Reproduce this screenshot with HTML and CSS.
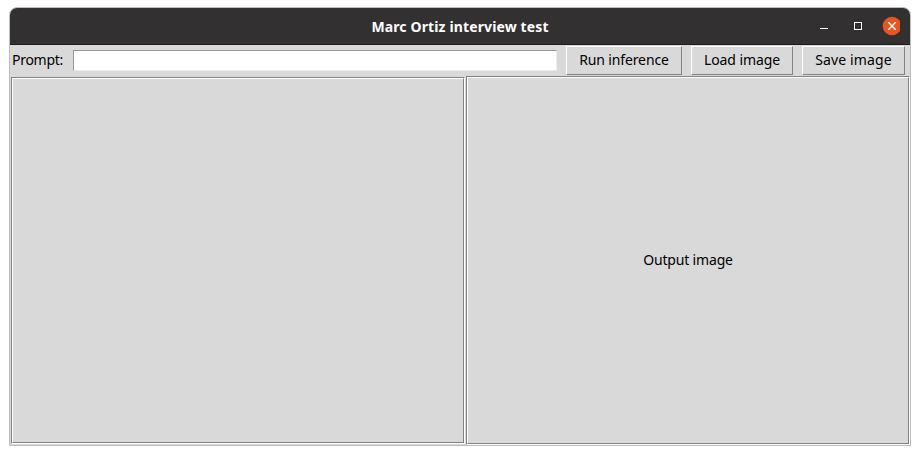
FILE: index.html
```
<!DOCTYPE html>
<html lang="en">
<head>
<meta charset="utf-8">
<title>Marc Ortiz interview test</title>
<link rel="stylesheet" href="styles.css">
</head>
<body>
<main class="window">
  <header class="titlebar">
    <h1 class="title">Marc Ortiz interview test</h1>
    <svg class="controls" width="88" height="20" viewBox="0 0 88 20" aria-hidden="true">
      <path d="M8 12.5h8" stroke="#fff"/>
      <rect x="42.5" y="6.5" width="7" height="7" fill="none" stroke="#fff"/>
      <circle cx="80" cy="10" r="9.3" fill="#e95420"/>
      <path d="M76.3 6.3l7.4 7.4m0-7.4l-7.4 7.4" stroke="#fff" stroke-width="1.4"/>
    </svg>
  </header>
  <form class="toolbar">
    <label class="label" for="prompt">Prompt:</label>
    <input class="entry" id="prompt" type="text">
    <button class="button run" type="button">Run inference</button>
    <button class="button load" type="button">Load image</button>
    <button class="button save" type="button">Save image</button>
  </form>
  <section class="panels">
    <div class="panel input"><div class="inner"></div></div>
    <div class="panel output"><div class="inner"><span>Output image</span></div></div>
  </section>
</main>
</body>
</html>
```
FILE: styles.css
```
* { box-sizing: border-box; }
body {
  margin: 0;
  padding: 7px 9px;
  background: #fff;
  font: 14px/20px "Noto Sans", sans-serif;
  color: #000;
}
.window {
  width: 902px;
  height: 439px;
  border: 1px solid #bdbdbd;
  border-radius: 8px 8px 0 0;
  background: #d9d9d9;
  overflow: hidden;
}
.titlebar {
  display: grid;
  grid-template-columns: 88px 1fr 88px;
  align-items: center;
  height: 37px;
  padding-right: 10px;
  padding-left: 10px;
  background: #333031;
  border-bottom: 1px solid #1d1b1c;
}
.title {
  grid-column: 2;
  margin: 0;
  padding-top: 2px;
  font-size: 14px;
  line-height: 20px;
  font-weight: 700;
  letter-spacing: 0.13px;
  text-align: center;
  color: #fff;
}
.toolbar {
  display: flex;
  height: 31px;
  padding: 1px 5px 0 2px;
}
.label {
  width: 61px;
  line-height: 28px;
  letter-spacing: -0.28px;
}
.entry {
  width: 484px;
  height: 21px;
  margin: 4px 9px 0 0;
  padding: 0 2px;
  border: 1px solid;
  border-color: #979797 #ececec #ececec #979797;
  border-radius: 0;
  background: #fff;
  outline: none;
}
.button {
  height: 29px;
  margin: 0 9px 0 0;
  padding: 0 0 1px;
  border: 1px solid;
  border-color: #fff #828282 #828282 #fff;
  background: #d9d9d9;
  font: inherit;
  color: inherit;
  white-space: nowrap;
}
.run { width: 116px; letter-spacing: -0.14px; }
.load { width: 102px; letter-spacing: -0.08px; }
.save { width: 103px; margin-right: 0; letter-spacing: 0.15px; }
.panels {
  display: flex;
  gap: 1px;
  height: 369px;
  padding-left: 1px;
}
.panel {
  border: 1px solid;
  border-color: #828282 #fff #fff #828282;
}
.inner {
  display: flex;
  align-items: center;
  justify-content: center;
  height: 100%;
  padding-bottom: 2px;
  border: 1px solid;
  border-color: #fff #828282 #828282 #fff;
  letter-spacing: -0.17px;
}
.input { width: 454px; height: 367px; margin-top: 1px; }
.output { width: 444px; height: 369px; }
```
